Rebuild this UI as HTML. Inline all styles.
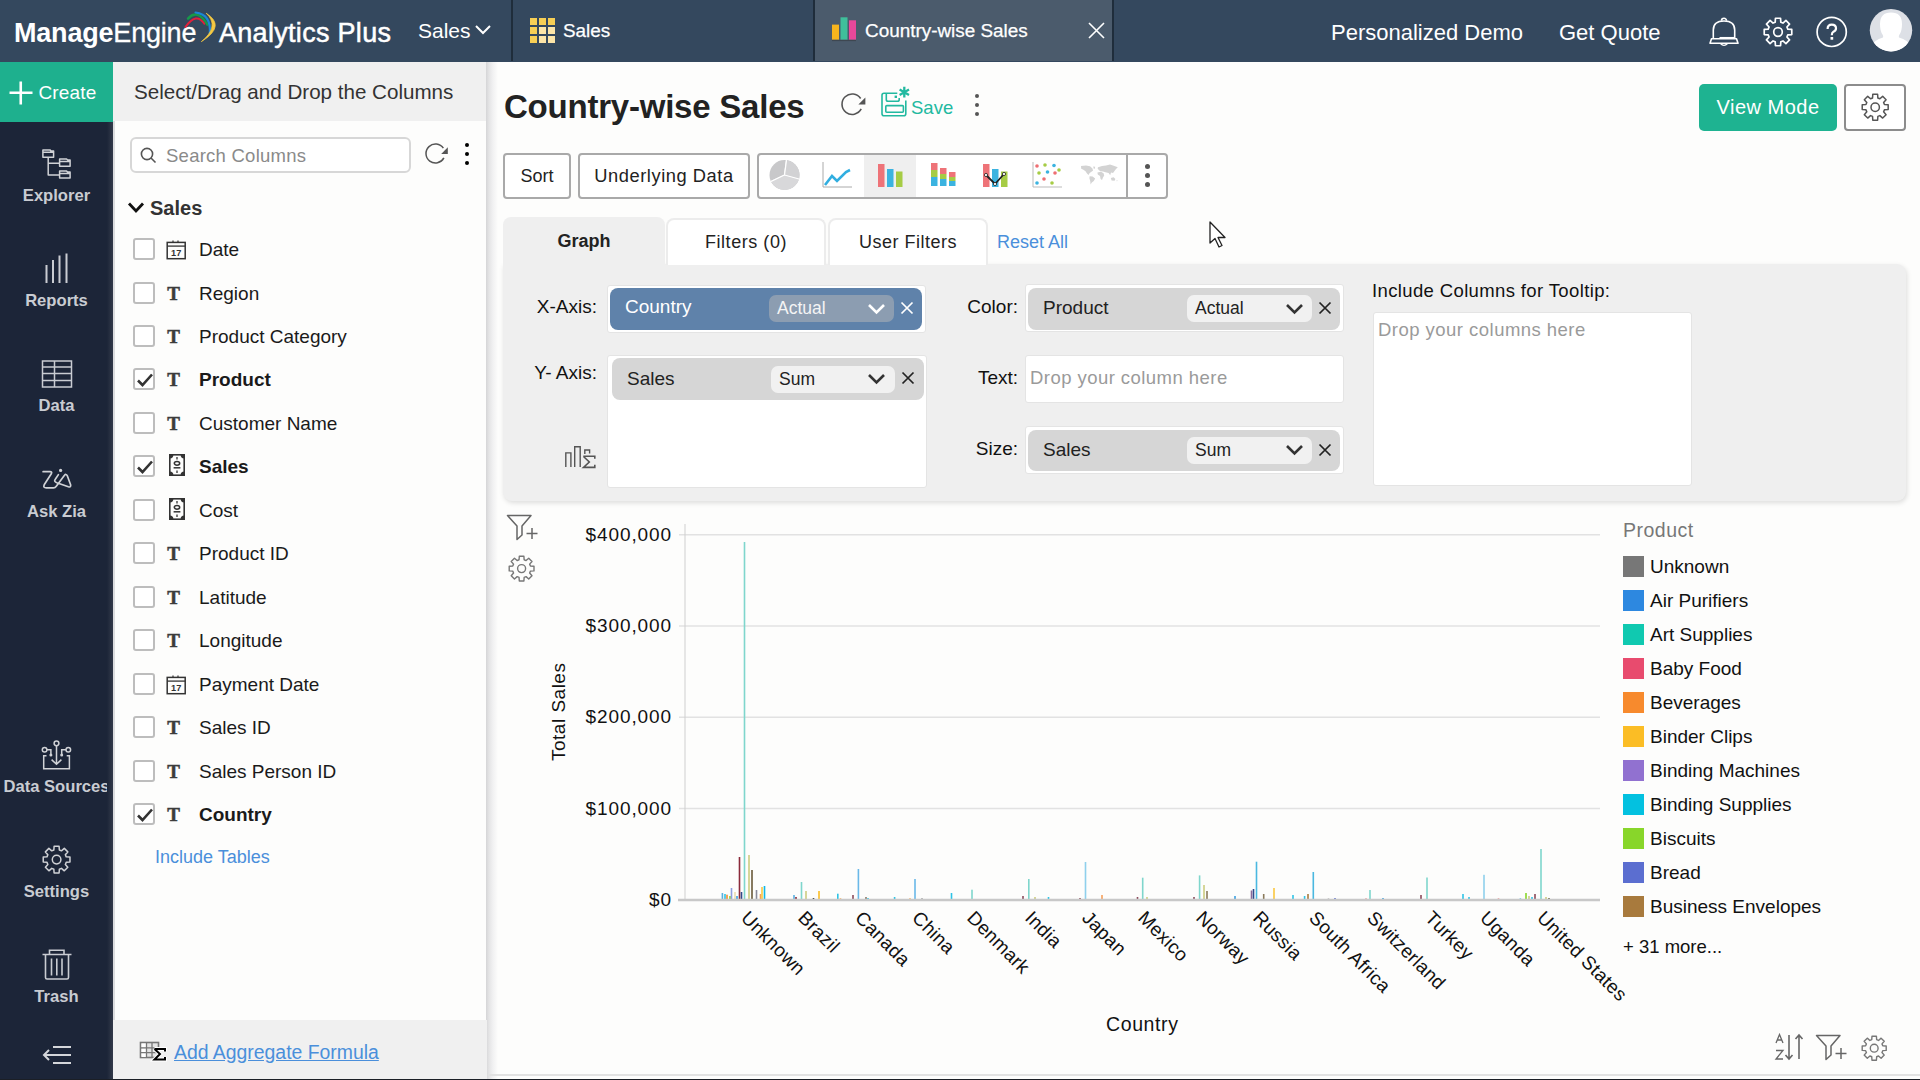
<!DOCTYPE html>
<html><head><meta charset="utf-8">
<style>
*{box-sizing:border-box;margin:0;padding:0}
html,body{width:1920px;height:1080px;overflow:hidden;background:#fdfdfc;font-family:"Liberation Sans",sans-serif;color:#111}
.a{position:absolute}
#top{left:0;top:0;width:1920px;height:62px;background:#34485e}
#side{left:0;top:62px;width:113px;height:1018px;background:#1c2538}
#create{left:0;top:62px;width:113px;height:60px;background:#1eb08e;color:#fff;font-size:19px}
.nav{left:0;width:113px;text-align:center;color:#c9ccd2;font-size:16.6px;font-weight:bold}
#cols{left:113px;top:62px;width:373px;height:1017px;background:#fdfdfc}
#colhead{left:113px;top:62px;width:373px;height:59px;background:#f0f0f0;color:#333;font-size:20px}
.ci{left:133px;height:22px;width:330px}
.cb{position:absolute;left:-0.5px;top:0;width:22px;height:22px;border:2px solid #bdbdbd;border-radius:3px;background:#fff}
.ti{position:absolute;left:29.5px;top:1px;width:22px;height:22px;font-family:"Liberation Serif",serif;font-weight:bold;font-size:19px;color:#3c3c3c;-webkit-text-stroke:0.5px #3c3c3c;text-align:center;line-height:22px}
.cl{position:absolute;left:66px;top:1px;font-size:19px;line-height:22px;color:#1a1a1a;white-space:nowrap}
.btn{border:2px solid #a9a9a9;border-radius:4px;background:#fff;font-size:19px;color:#222;text-align:center}
.lbl{font-size:19px;color:#111;text-align:right;white-space:nowrap}
.dz{background:#fff;border:1px solid #e4e4e4;border-radius:3px}
.pill{background:#d6d6d6;border-radius:8px}
.sub{background:#f1f1f1;border-radius:7px}
.ylab{font-size:19px;letter-spacing:0.9px;color:#111;text-align:right;width:120px;white-space:nowrap}
.xl{font-size:19px;letter-spacing:0.3px;color:#111;white-space:nowrap;transform-origin:0 0;transform:rotate(45deg)}
.lg{left:1623px;height:21px;width:290px}
.sw{position:absolute;left:0;top:0;width:21px;height:21px}
.lt{position:absolute;left:27px;top:-1px;font-size:19px;line-height:23px;color:#111;white-space:nowrap}
</style></head><body>
<div id="top" class="a"></div>
<div class="a" style="left:14px;top:16px;font-size:27px;color:#fff;white-space:nowrap;line-height:34px;letter-spacing:-0.2px" id="logo1"><b style="font-weight:bold">Manage</b><span style="-webkit-text-stroke:0.3px #fff">Engine</span></div>
<svg class="a" style="left:175px;top:5px" width="50" height="45" viewBox="175 5 50 45" fill="none" stroke-linecap="round">
<path d="M185.5 27 Q196.2 11.8 204.4 23.6" stroke="#e0203c" stroke-width="2.1"/>
<path d="M188 18.6 Q197.4 8.2 207.4 24.6" stroke="#17984a" stroke-width="2.5"/>
<path d="M195.5 12.5 Q211.6 14.4 209.8 33.8" stroke="#1b86d6" stroke-width="2.2"/>
<path d="M206.5 13.4 Q226.5 26 201.3 41.7 Q220 26.5 206.5 13.4 Z" fill="#f4c842" stroke="#f4c842" stroke-width="0.7"/>
</svg>
<div class="a" style="left:219px;top:16px;font-size:27px;color:#fff;white-space:nowrap;line-height:34px;letter-spacing:0.3px;-webkit-text-stroke:0.5px #fff" id="logo2">Analytics Plus</div>
<div class="a" style="left:418px;top:17px;font-size:21px;color:#fff;line-height:28px" id="salesdd">Sales</div>
<svg class="a" style="left:474px;top:24px" width="18" height="12" viewBox="0 0 18 12"><path d="M2 2 L9 9 L16 2" stroke="#fff" stroke-width="2" fill="none"/></svg>
<div class="a" style="left:511px;top:0;width:2px;height:61px;background:#1f2d3b"></div>
<svg class="a" style="left:530px;top:18px" width="25" height="25" viewBox="0 0 25 25">
<rect x="0" y="0" width="7" height="7" fill="#f7cf55"/><rect x="9" y="0" width="7" height="7" fill="#f7cf55"/><rect x="18" y="0" width="7" height="7" fill="#f7cf55"/>
<rect x="0" y="9" width="7" height="7" fill="#f7cf55"/><rect x="9" y="9" width="7" height="7" fill="#fce5a8"/><rect x="18" y="9" width="7" height="7" fill="#fce5a8"/>
<rect x="0" y="18" width="7" height="7" fill="#f7cf55"/><rect x="9" y="18" width="7" height="7" fill="#fce5a8"/><rect x="18" y="18" width="7" height="7" fill="#fce5a8"/>
</svg>
<div class="a" style="left:563px;top:17px;font-size:18.9px;color:#fff;line-height:28px;-webkit-text-stroke:0.25px #fff" id="tab1">Sales</div>
<div class="a" style="left:813px;top:0;width:301px;height:61px;background:#4b5b6c;border-left:2px solid #1f2d3b;border-right:2px solid #1f2d3b"></div>
<svg class="a" style="left:831px;top:16px" width="27" height="27" viewBox="831 16 27 27"><rect x="832" y="24.6" width="7" height="15" fill="#f7b51e"/><rect x="840.5" y="17.3" width="7" height="22.3" fill="#3fbf9b"/><rect x="849" y="20.3" width="7" height="19.3" fill="#e8489a"/><path d="M832 40.6 H856" stroke="#3a4048" stroke-width="0.8"/></svg>
<div class="a" style="left:865px;top:17px;font-size:18.9px;color:#fff;line-height:28px;white-space:nowrap;-webkit-text-stroke:0.25px #fff" id="tab2">Country-wise Sales</div>
<svg class="a" style="left:1088px;top:22px" width="17" height="17" viewBox="0 0 17 17"><path d="M1 1 L16 16 M16 1 L1 16" stroke="#fff" stroke-width="1.6"/></svg>
<div class="a" style="left:1331px;top:18.5px;font-size:22px;color:#fff;line-height:28px;white-space:nowrap" id="pdemo">Personalized Demo</div>
<div class="a" style="left:1559px;top:18.5px;font-size:22px;color:#fff;line-height:28px;white-space:nowrap" id="gq">Get Quote</div>
<svg class="a" style="left:1704px;top:14px" width="40" height="36" viewBox="1704 14 40 36" fill="none" stroke="#fff" stroke-width="1.6" stroke-linejoin="round">
<path d="M1713.3 38.8 V30 Q1713.3 21 1724 21 Q1734.7 21 1734.7 30 V38.8"/>
<path d="M1710 43.2 L1711.5 38.8 H1736.5 L1738 43.2 Z"/>
<path d="M1719.5 37.6 H1734.5" stroke-width="1.3"/>
<path d="M1721.5 20.8 A2.5 2.5 0 0 1 1726.5 20.8"/>
<path d="M1720.5 43.6 Q1724 47.2 1727.5 43.6" stroke-width="1.4"/>
</svg>
<svg class="a" style="left:1761.00px;top:14.80px" width="34" height="34" viewBox="1761.00 14.80 34 34" fill="none" stroke="#fff" stroke-width="1.7" stroke-linejoin="round"><path d="M1775.19 22.00 L1775.45 18.03 L1780.55 18.03 L1780.81 22.00 L1782.95 22.88 L1785.93 20.26 L1789.54 23.87 L1786.92 26.85 L1787.80 28.99 L1791.77 29.25 L1791.77 34.35 L1787.80 34.61 L1786.92 36.75 L1789.54 39.73 L1785.93 43.34 L1782.95 40.72 L1780.81 41.60 L1780.55 45.57 L1775.45 45.57 L1775.19 41.60 L1773.05 40.72 L1770.07 43.34 L1766.46 39.73 L1769.08 36.75 L1768.20 34.61 L1764.23 34.35 L1764.23 29.25 L1768.20 28.99 L1769.08 26.85 L1766.46 23.87 L1770.07 20.26 L1773.05 22.88 Z"/><circle cx="1778.00" cy="31.80" r="4.30"/></svg>
<svg class="a" style="left:1814px;top:14px" width="36" height="36" viewBox="1814 14 36 36" fill="none" stroke="#fff">
<circle cx="1831.7" cy="31.9" r="14.6" stroke-width="1.7"/>
<path d="M1827.6 29 Q1827.6 24.6 1831.8 24.6 Q1836 24.6 1836 28.2 Q1836 30.6 1833.4 31.8 Q1831.8 32.6 1831.8 35.2" stroke-width="2.2"/>
<rect x="1830.5" y="37" width="2.7" height="2.7" fill="#fff" stroke="none"/>
</svg>
<svg class="a" style="left:1869px;top:8px" width="45" height="45" viewBox="1869 8 45 45">
<defs><clipPath id="avc"><circle cx="1891" cy="30.2" r="21.2"/></clipPath></defs>
<circle cx="1891" cy="30.2" r="21.2" fill="#dde0e6"/>
<g clip-path="url(#avc)" fill="#fff">
<path d="M1880 24 Q1880 12.5 1891 12.5 Q1902 12.5 1902 24 Q1902 31 1899.5 34.5 Q1898.5 36 1899 37.5 Q1908 40 1911 46 L1911 56 H1871 V46 Q1874 40 1883 37.5 Q1883.5 36 1882.5 34.5 Q1880 31 1880 24 Z"/>
</g></svg>

<div id="side" class="a"></div>
<div id="create" class="a"></div>
<svg class="a" style="left:8.5px;top:80.5px" width="24" height="24" viewBox="0 0 24 24"><path d="M11.75 0.5 V23.5 M0.5 11.75 H23.5" stroke="#fff" stroke-width="2.6"/></svg>
<div class="a" style="left:38.5px;top:81px;font-size:19px;color:#fff;line-height:24px;letter-spacing:0.15px" id="createtxt">Create</div>
<svg class="a" style="left:38px;top:145px" width="36" height="36" viewBox="38 145 36 36" fill="none" stroke="#d0d2d6" stroke-width="1.5" stroke-linejoin="round"><path d="M42.9 157.3 V149.9 H49.9 L50.9 150.9 H53.6 V157.3 Z M42.9 152.3 H53.6 M59.6 166.2 V159.0 H66.6 L67.6 160.0 H70.1 V166.2 Z M59.6 161.4 H70.1 M59.6 178.1 V171.1 H66.6 L67.6 172.1 H70.1 V178.1 Z M59.6 173.5 H70.1 M48.2 157.5 V175 H59.5 M48.2 163.2 H59.5"/></svg>
<div class="a nav" style="top:185px;line-height:22px" id="nav1">Explorer</div>
<svg class="a" style="left:44px;top:252px" width="26" height="34" viewBox="0 0 26 34" fill="none" stroke="#c9ccd2" stroke-width="2">
<path d="M2.5 13 V31 M9 8 V31 M15.5 3.5 V31 M22.5 1.5 V31"/>
</svg>
<div class="a nav" style="top:290px;line-height:22px" id="nav2">Reports</div>
<svg class="a" style="left:41px;top:359px" width="32" height="30" viewBox="0 0 32 30" fill="none" stroke="#c9ccd2" stroke-width="1.5">
<rect x="1.5" y="2" width="29" height="26"/><path d="M13.5 2 V28 M1.5 8 H30.5 M1.5 14.5 H30.5 M1.5 21.5 H30.5"/>
</svg>
<div class="a nav" style="top:395px;line-height:22px" id="nav3">Data</div>
<svg class="a" style="left:38px;top:465px" width="36" height="28" viewBox="38 465 36 28" fill="none" stroke="#d0d2d6" stroke-width="1.7" stroke-linejoin="round" stroke-linecap="round">
<path d="M43.1 471.7 H50 Q52.5 471.7 51.3 473.8 L44.2 484.8 Q42.8 487.9 46.3 487.9 H53.5 Q55.2 487.9 56.3 486.3 L64.3 475.5 Q66.1 473.3 67.3 475.8 L70.6 484.8 Q71.2 487.6 68.4 486.8 L56.8 482.8 Q53.5 481.5 55.3 479.3 L58.4 474.6"/>
<circle cx="60.6" cy="470.4" r="1.6" fill="#d0d2d6" stroke="none"/>
</svg>
<div class="a nav" style="top:501px;line-height:22px" id="nav4">Ask Zia</div>
<svg class="a" style="left:38px;top:738px" width="36" height="34" viewBox="38 738 36 34" fill="none" stroke="#d0d2d6" stroke-width="1.5">
<path d="M46.5 755.7 H43.7 V768.7 H69.4 V755.7 H66.7"/>
<path d="M56.5 745.8 V764 M51.6 759.6 L56.5 764.3 L61.4 759.6"/>
<circle cx="56.5" cy="743.3" r="2.4"/><circle cx="44.6" cy="749.8" r="2.3"/><circle cx="68.3" cy="749.8" r="2.3"/>
<path d="M46.9 749.8 H50.9 V754 M66 749.8 H61.7 V754"/>
<circle cx="50.9" cy="755" r="1.5" fill="#d0d2d6" stroke="none"/><circle cx="61.7" cy="755" r="1.5" fill="#d0d2d6" stroke="none"/>
</svg>
<div class="a nav" style="top:776px;line-height:22px;font-size:16.6px" id="nav5">Data Sources</div>
<svg class="a" style="left:40.00px;top:843.40px" width="33" height="33" viewBox="40.00 843.40 33 33" fill="none" stroke="#d0d2d6" stroke-width="1.5" stroke-linejoin="round"><path d="M53.84 850.39 L54.12 846.63 L59.08 846.63 L59.36 850.39 L61.45 851.25 L64.30 848.79 L67.81 852.30 L65.35 855.15 L66.21 857.24 L69.97 857.52 L69.97 862.48 L66.21 862.76 L65.35 864.85 L67.81 867.70 L64.30 871.21 L61.45 868.75 L59.36 869.61 L59.08 873.37 L54.12 873.37 L53.84 869.61 L51.75 868.75 L48.90 871.21 L45.39 867.70 L47.85 864.85 L46.99 862.76 L43.23 862.48 L43.23 857.52 L46.99 857.24 L47.85 855.15 L45.39 852.30 L48.90 848.79 L51.75 851.25 Z"/><circle cx="56.60" cy="860.00" r="4.30"/></svg>
<div class="a nav" style="top:881px;line-height:22px" id="nav6">Settings</div>
<svg class="a" style="left:41px;top:948px" width="32" height="33" viewBox="0 0 32 33" fill="none" stroke="#c9ccd2" stroke-width="1.6">
<path d="M1.5 6.5 H30.5 M8.5 6 V2.2 H23 V6 M4.5 7 V29.5 Q4.5 31 6 31 H26 Q27.5 31 27.5 29.5 V7 M10.5 10.5 V27.5 M15.8 10.5 V27.5 M21 10.5 V27.5"/>
</svg>
<div class="a nav" style="top:986px;line-height:22px" id="nav7">Trash</div>
<svg class="a" style="left:40px;top:1043px" width="34" height="24" viewBox="0 0 34 24" fill="none" stroke="#d4d6da" stroke-width="2"><path d="M13 4 H31 M13 20 H31 M4 12 H31 M9 7 L4 12 L9 17"/></svg>


<div id="cols" class="a"></div>
<div class="a" style="left:486px;top:62px;width:12px;height:1017px;background:linear-gradient(to right,#d5d5d7,#e4e4e5 25%,#f0f0f1 55%,#fdfdfc)"></div>
<div class="a" style="left:113px;top:62px;width:2px;height:1017px;background:#dcdddf"></div>
<div class="a" style="left:107px;top:122px;width:6px;height:957px;background:linear-gradient(to right,#1c2538,#333a4a)"></div>
<div id="colhead" class="a"></div>
<div class="a" style="left:134px;top:80px;font-size:20.6px;color:#333;line-height:24px;white-space:nowrap" id="colhdtxt">Select/Drag and Drop the Columns</div>
<div class="a" style="left:130px;top:137px;width:281px;height:36px;border:2px solid #d7d7d7;border-radius:6px;background:#fff"></div>
<svg class="a" style="left:140px;top:147px" width="17" height="17" viewBox="0 0 17 17" fill="none" stroke="#555" stroke-width="1.6"><circle cx="7" cy="7" r="5.6"/><path d="M11 11 L15.5 15.5"/></svg>
<div class="a" style="left:166px;top:145px;font-size:18.5px;letter-spacing:0.25px;color:#8a8a8a;line-height:22px;white-space:nowrap" id="searchph">Search Columns</div>
<svg class="a" style="left:420.9px;top:139.0px" width="29" height="29" viewBox="420.9 139.0 29 29"><path d="M443.79 157.96 A9.50 9.50 0 1 1 443.28 148.19" fill="none" stroke="#555" stroke-width="1.5"/><path d="M447.72 147.28 V153.88 H441.12 Z" fill="#555"/></svg>
<div class="a" style="left:464.9px;top:142.9px;width:4.2px;height:4.2px;border-radius:50%;background:#000"></div>
<div class="a" style="left:464.9px;top:151.9px;width:4.2px;height:4.2px;border-radius:50%;background:#000"></div>
<div class="a" style="left:464.9px;top:160.9px;width:4.2px;height:4.2px;border-radius:50%;background:#000"></div>
<svg class="a" style="left:127px;top:201px" width="18" height="13" viewBox="0 0 18 13"><path d="M2 2.5 L9 10 L16 2.5" stroke="#111" stroke-width="2.8" fill="none"/></svg>
<div class="a" style="left:150px;top:196px;font-size:20px;font-weight:bold;color:#333;line-height:24px" id="salestree">Sales</div>
<div class="a ci" style="top:238.0px"><div class="cb"></div><svg style="position:absolute;left:33px;top:2px" width="21" height="20" viewBox="0 0 21 20" fill="none" stroke="#333" stroke-width="1.5"><rect x="1.2" y="2.4" width="18" height="16.3"/><path d="M1.2 6.1 H19.2" stroke-width="1.3"/><path d="M7 0.6 V2.6 M12 0.6 V2.6" stroke-width="1.2"/><text x="10.2" y="16.2" font-size="9.2" font-family="Liberation Sans" font-weight="bold" fill="#333" stroke="none" text-anchor="middle">17</text></svg><div class="cl" style="">Date</div></div>
<div class="a ci" style="top:281.5px"><div class="cb"></div><div class="ti">T</div><div class="cl" style="">Region</div></div>
<div class="a ci" style="top:325.0px"><div class="cb"></div><div class="ti">T</div><div class="cl" style="">Product Category</div></div>
<div class="a ci" style="top:368.4px"><div class="cb"><svg style="position:absolute;left:1px;top:2px" width="18" height="16" viewBox="0 0 18 16"><path d="M2 8.5 L6.5 13 L16 2.5" stroke="#333" stroke-width="2.6" fill="none"/></svg></div><div class="ti">T</div><div class="cl" style="font-weight:bold">Product</div></div>
<div class="a ci" style="top:411.9px"><div class="cb"></div><div class="ti">T</div><div class="cl" style="">Customer Name</div></div>
<div class="a ci" style="top:455.4px"><div class="cb"><svg style="position:absolute;left:1px;top:2px" width="18" height="16" viewBox="0 0 18 16"><path d="M2 8.5 L6.5 13 L16 2.5" stroke="#333" stroke-width="2.6" fill="none"/></svg></div><svg style="position:absolute;left:36px;top:-1px" width="16" height="22" viewBox="0 0 16 22" fill="none" stroke="#333"><rect x="0.8" y="0.8" width="14.4" height="20.4" stroke-width="1.6"/><path d="M0.8 0.8 h3.6 a3.6 3.6 0 0 1 -3.6 3.6 z M15.2 0.8 h-3.6 a3.6 3.6 0 0 0 3.6 3.6 z M0.8 21.2 h3.6 a3.6 3.6 0 0 0 -3.6 -3.6 z M15.2 21.2 h-3.6 a3.6 3.6 0 0 1 3.6 -3.6 z" fill="#333" stroke="none"/><path d="M8 3 V5.5 M8 16.5 V19" stroke-width="1.3"/><ellipse cx="8" cy="9.3" rx="2.7" ry="1.9" stroke-width="1.5"/><path d="M4.6 13.8 H11.4" stroke-width="1.5"/></svg><div class="cl" style="font-weight:bold">Sales</div></div>
<div class="a ci" style="top:498.9px"><div class="cb"></div><svg style="position:absolute;left:36px;top:-1px" width="16" height="22" viewBox="0 0 16 22" fill="none" stroke="#333"><rect x="0.8" y="0.8" width="14.4" height="20.4" stroke-width="1.6"/><path d="M0.8 0.8 h3.6 a3.6 3.6 0 0 1 -3.6 3.6 z M15.2 0.8 h-3.6 a3.6 3.6 0 0 0 3.6 3.6 z M0.8 21.2 h3.6 a3.6 3.6 0 0 0 -3.6 -3.6 z M15.2 21.2 h-3.6 a3.6 3.6 0 0 1 3.6 -3.6 z" fill="#333" stroke="none"/><path d="M8 3 V5.5 M8 16.5 V19" stroke-width="1.3"/><ellipse cx="8" cy="9.3" rx="2.7" ry="1.9" stroke-width="1.5"/><path d="M4.6 13.8 H11.4" stroke-width="1.5"/></svg><div class="cl" style="">Cost</div></div>
<div class="a ci" style="top:542.4px"><div class="cb"></div><div class="ti">T</div><div class="cl" style="">Product ID</div></div>
<div class="a ci" style="top:585.8px"><div class="cb"></div><div class="ti">T</div><div class="cl" style="">Latitude</div></div>
<div class="a ci" style="top:629.3px"><div class="cb"></div><div class="ti">T</div><div class="cl" style="">Longitude</div></div>
<div class="a ci" style="top:672.8px"><div class="cb"></div><svg style="position:absolute;left:33px;top:2px" width="21" height="20" viewBox="0 0 21 20" fill="none" stroke="#333" stroke-width="1.5"><rect x="1.2" y="2.4" width="18" height="16.3"/><path d="M1.2 6.1 H19.2" stroke-width="1.3"/><path d="M7 0.6 V2.6 M12 0.6 V2.6" stroke-width="1.2"/><text x="10.2" y="16.2" font-size="9.2" font-family="Liberation Sans" font-weight="bold" fill="#333" stroke="none" text-anchor="middle">17</text></svg><div class="cl" style="">Payment Date</div></div>
<div class="a ci" style="top:716.3px"><div class="cb"></div><div class="ti">T</div><div class="cl" style="">Sales ID</div></div>
<div class="a ci" style="top:759.8px"><div class="cb"></div><div class="ti">T</div><div class="cl" style="">Sales Person ID</div></div>
<div class="a ci" style="top:803.2px"><div class="cb"><svg style="position:absolute;left:1px;top:2px" width="18" height="16" viewBox="0 0 18 16"><path d="M2 8.5 L6.5 13 L16 2.5" stroke="#333" stroke-width="2.6" fill="none"/></svg></div><div class="ti">T</div><div class="cl" style="font-weight:bold">Country</div></div>
<div class="a" style="left:155px;top:846px;font-size:18px;color:#4a8fdb;line-height:22px;white-space:nowrap" id="incl">Include Tables</div>
<div class="a" style="left:113px;top:1020px;width:374px;height:59px;background:#f0f0f0"></div>
<svg class="a" style="left:139px;top:1041px" width="30" height="22" viewBox="0 0 30 22">
<rect x="1.5" y="1.5" width="18" height="15" fill="#e4e4e4" stroke="#777" stroke-width="1.6"/>
<rect x="2.5" y="2.5" width="5" height="4" fill="#fff"/><rect x="2.5" y="7.5" width="5" height="4" fill="#fff"/><rect x="2.5" y="12" width="5" height="4" fill="#fff"/>
<path d="M7.5 1.5 V16.5 M13 1.5 V16.5 M1.5 6.8 H19.5 M1.5 11.6 H19.5" stroke="#777" stroke-width="1.3"/>
<path d="M15.5 8 H26 V10.5 M15.5 8 L21 13 L15.5 18.5 H26 V16" stroke="#fff" stroke-width="4" fill="none"/>
<path d="M15.5 8 H26 V10.5 M15.5 8 L21 13 L15.5 18.5 H26 V16" stroke="#000" stroke-width="2" fill="none"/>
</svg>
<div class="a" style="left:174px;top:1039.5px;font-size:19.4px;color:#4a8fdb;line-height:24px;white-space:nowrap;text-decoration:underline" id="addagg">Add Aggregate Formula</div>


<div class="a" style="left:504px;top:88px;font-size:33px;letter-spacing:-0.22px;font-weight:bold;color:#222;line-height:38px;white-space:nowrap" id="title">Country-wise Sales</div>
<svg class="a" style="left:837.4px;top:88.8px" width="30" height="30" viewBox="837.4 88.8 30 30"><path d="M861.61 108.79 A10.20 10.20 0 1 1 861.06 98.30" fill="none" stroke="#555" stroke-width="1.6"/><path d="M865.79 97.41 V104.41 H858.79 Z" fill="#555"/></svg>
<svg class="a" style="left:878px;top:84px" width="36" height="36" viewBox="878 84 36 36" fill="none" stroke="#22b9a0" stroke-width="1.6">
<path d="M897.3 93.2 H884 Q882 93.2 882 95.2 V113.8 Q882 115.8 884 115.8 H903.8 Q905.8 115.8 905.8 113.8 V100.5"/>
<path d="M886.3 93.4 V99.4 Q886.3 101.2 888 101.2 H897.5 Q899.2 101.2 899.2 99.4 V98"/>
<rect x="885.8" y="105.6" width="17.6" height="6.6" rx="1"/>
<rect x="894.6" y="95.6" width="2.4" height="2.4" fill="#22b9a0" stroke="none"/>
<path d="M904.3 86.8 V97.6 M899.6 89.5 L909 94.9 M909 89.5 L899.6 94.9" stroke-width="2.3"/>
</svg>
<div class="a" style="left:911px;top:97px;font-size:18.5px;color:#22b9a0;line-height:22px" id="save">Save</div>
<div class="a" style="left:974.8px;top:93.8px;width:4.4px;height:4.4px;border-radius:50%;background:#555"></div>
<div class="a" style="left:974.8px;top:102.8px;width:4.4px;height:4.4px;border-radius:50%;background:#555"></div>
<div class="a" style="left:974.8px;top:111.8px;width:4.4px;height:4.4px;border-radius:50%;background:#555"></div>
<div class="a" style="left:1699px;top:84px;width:138px;height:47px;background:#1eb391;border-radius:5px"></div>
<div class="a" style="left:1699px;top:84px;width:138px;height:47px;font-size:20px;letter-spacing:0.5px;color:#fff;line-height:47px;text-align:center" id="viewmode">View Mode</div>
<div class="a btn" style="left:1844px;top:84px;width:62px;height:47px;border-color:#8c8c8c"></div>
<svg class="a" style="left:1858.80px;top:91.10px" width="32" height="32" viewBox="1858.80 91.10 32 32" fill="none" stroke="#555" stroke-width="1.5" stroke-linejoin="round"><path d="M1872.35 98.07 L1872.59 94.32 L1877.41 94.32 L1877.65 98.07 L1879.65 98.90 L1882.48 96.42 L1885.88 99.82 L1883.40 102.65 L1884.23 104.65 L1887.98 104.89 L1887.98 109.71 L1884.23 109.95 L1883.40 111.95 L1885.88 114.78 L1882.48 118.18 L1879.65 115.70 L1877.65 116.53 L1877.41 120.28 L1872.59 120.28 L1872.35 116.53 L1870.35 115.70 L1867.52 118.18 L1864.12 114.78 L1866.60 111.95 L1865.77 109.95 L1862.02 109.71 L1862.02 104.89 L1865.77 104.65 L1866.60 102.65 L1864.12 99.82 L1867.52 96.42 L1870.35 98.90 Z"/><circle cx="1875.00" cy="107.30" r="4.20"/></svg>

<div class="a btn" style="left:503px;top:153px;width:68px;height:46px"></div>
<div class="a" style="left:503px;top:153px;width:68px;height:46px;font-size:18px;line-height:46px;text-align:center;color:#222" id="sort">Sort</div>
<div class="a btn" style="left:578px;top:153px;width:172px;height:46px"></div>
<div class="a" style="left:578px;top:153px;width:172px;height:46px;font-size:18.3px;letter-spacing:0.55px;line-height:46px;text-align:center;color:#222" id="ud">Underlying Data</div>
<div class="a btn" style="left:757px;top:153px;width:411px;height:46px"></div>
<div class="a" style="left:864px;top:155px;width:52px;height:42px;background:#efefef"></div>
<div class="a" style="left:1126px;top:154px;width:2px;height:44px;background:#a9a9a9"></div>
<svg class="a" style="left:768px;top:159px" width="34" height="32" viewBox="0 0 34 32">
<circle cx="16.5" cy="16" r="15" fill="#c8c8ca"/>
<path d="M16.5 16 L18.5 1.2 M16.5 16 L31 20 M16.5 16 L3 22.5" stroke="#fff" stroke-width="1.2"/>
<path d="M16.5 16 L18.5 1.2 A15 15 0 0 1 31 20 Z" fill="#d2d2d4"/>
<path d="M16.5 16 L31 20 A15 15 0 0 1 3 22.5 Z" fill="#d8d8da"/>
<path d="M16.5 16 L18.5 1.2 M16.5 16 L31 20 M16.5 16 L3 22.5" stroke="#fff" stroke-width="1.2"/>
</svg>
<svg class="a" style="left:822px;top:161px" width="32" height="28" viewBox="0 0 32 28">
<path d="M1 1 V26 H30" stroke="#aaa" stroke-width="1" fill="none"/>
<path d="M3 24 L10 15 L15 20 L24 11 L28 9" stroke="#31aee0" stroke-width="2.6" fill="none"/>
</svg>
<svg class="a" style="left:876px;top:163px" width="30" height="25" viewBox="0 0 30 25">
<rect x="2" y="1" width="6.5" height="23" fill="#ee7378"/><rect x="11" y="6" width="6.5" height="18" fill="#3bb3e0"/><rect x="20" y="8.5" width="6.5" height="15.5" fill="#a6cc45"/>
</svg>
<svg class="a" style="left:930px;top:162px" width="28" height="25" viewBox="0 0 28 25">
<rect x="1" y="1" width="6.5" height="7" fill="#ee7378"/><rect x="1" y="8" width="6.5" height="7" fill="#a6cc45"/><rect x="1" y="15" width="6.5" height="9" fill="#3bb3e0"/>
<rect x="10" y="6" width="6.5" height="6" fill="#ee7378"/><rect x="10" y="12" width="6.5" height="5" fill="#a6cc45"/><rect x="10" y="17" width="6.5" height="7" fill="#3bb3e0"/>
<rect x="19" y="10" width="6.5" height="5" fill="#ee7378"/><rect x="19" y="15" width="6.5" height="4" fill="#a6cc45"/><rect x="19" y="19" width="6.5" height="5" fill="#3bb3e0"/>
</svg>
<svg class="a" style="left:982px;top:163px" width="28" height="25" viewBox="0 0 28 25">
<rect x="1" y="1" width="6.5" height="23" fill="#ee7378"/><rect x="10" y="6" width="6.5" height="18" fill="#3bb3e0"/><rect x="19" y="8.5" width="6.5" height="15.5" fill="#a6cc45"/>
<path d="M4 12 L13 21 L22 11" stroke="#222" stroke-width="1.8" fill="none"/>
<circle cx="4" cy="12" r="1.6" fill="#fff" stroke="#222" stroke-width="0.8"/><circle cx="13" cy="21" r="1.6" fill="#fff" stroke="#222" stroke-width="0.8"/><circle cx="22" cy="11" r="1.6" fill="#fff" stroke="#222" stroke-width="0.8"/>
</svg>
<svg class="a" style="left:1032px;top:161px" width="32" height="28" viewBox="0 0 32 28">
<path d="M1 1 V26 H30" stroke="#bbb" stroke-width="1" fill="none"/>
<circle cx="5" cy="5" r="1.8" fill="#ee6f73"/><circle cx="13" cy="4" r="1.8" fill="#a6cc45"/><circle cx="22" cy="4.5" r="1.8" fill="#3bb3e0"/><circle cx="27" cy="9" r="1.8" fill="#a6cc45"/>
<circle cx="7" cy="12" r="1.8" fill="#a6cc45"/><circle cx="15.5" cy="11" r="1.8" fill="#3bb3e0"/><circle cx="23" cy="12" r="1.8" fill="#ee6f73"/>
<circle cx="12" cy="18" r="1.8" fill="#ee6f73"/><circle cx="5" cy="22" r="1.8" fill="#3bb3e0"/><circle cx="20" cy="22" r="1.8" fill="#a6cc45"/>
</svg>
<svg class="a" style="left:1078px;top:162px" width="44" height="26" viewBox="1078 162 44 26" fill="#d3d3d3">
<path d="M1081 166 L1086 165.6 L1090 166.2 L1092.5 168.5 L1093 170.8 L1091 172 L1089.5 173.2 L1088.5 175 L1087 173.5 L1085.5 171.2 L1083 169.5 L1081.2 168.8 Z"/>
<path d="M1093.2 166.4 L1095.2 166.8 L1094.6 169 L1093.6 168.6 Z"/>
<path d="M1089.6 176.2 L1092.6 176.4 L1095.2 178.4 L1093.8 181 L1091.8 182.6 L1090.6 184.6 L1090.2 181 L1089.4 178.2 Z"/>
<path d="M1098 167.2 L1102 166 L1106 165.6 L1110 164.6 L1113 165.4 L1117.8 167.2 L1116 169 L1114.5 171 L1113 173 L1111 172.4 L1110.2 175.2 L1108.6 173 L1105.5 172.2 L1103 171.5 L1100.5 171.2 L1099 170.2 L1097.6 168.6 Z"/>
<path d="M1097.4 172.6 L1101 171.8 L1103.6 173.2 L1104.2 175.4 L1103 177.4 L1102 180 L1100.6 179 L1100 176 L1097.8 174.6 Z"/>
<path d="M1110.8 178 L1113.6 177.2 L1115.4 179 L1114.6 180.8 L1111.6 180.6 Z"/>
<path d="M1116.4 180.6 L1117.6 180.2 L1117 181.6 Z"/>
</svg>
<div class="a" style="left:1145px;top:164px;width:5px;height:5px;border-radius:50%;background:#555"></div>
<div class="a" style="left:1145px;top:173px;width:5px;height:5px;border-radius:50%;background:#555"></div>
<div class="a" style="left:1145px;top:182px;width:5px;height:5px;border-radius:50%;background:#555"></div>

<div class="a" style="left:503px;top:264px;width:1403px;height:237px;background:#efefef;border-radius:0 9px 9px 9px;box-shadow:1px 2px 5px rgba(0,0,0,.13)"></div>
<div class="a" style="left:503px;top:217px;width:162px;height:48px;background:#efefef;border-radius:8px 8px 0 0"></div>
<div class="a" style="left:666px;top:218px;width:160px;height:47px;background:#fff;border:2px solid #ececec;border-bottom:none;border-radius:8px 8px 0 0"></div>
<div class="a" style="left:828px;top:218px;width:160px;height:47px;background:#fff;border:2px solid #ececec;border-bottom:none;border-radius:8px 8px 0 0"></div>
<div class="a" style="left:503px;top:217px;width:162px;height:48px;font-size:18px;font-weight:bold;line-height:48px;text-align:center;color:#222" id="tgraph">Graph</div>
<div class="a" style="left:666px;top:218px;width:160px;height:47px;font-size:18px;letter-spacing:0.55px;line-height:49px;text-align:center;color:#222" id="tfilt">Filters (0)</div>
<div class="a" style="left:828px;top:218px;width:160px;height:47px;font-size:18px;letter-spacing:0.5px;line-height:49px;text-align:center;color:#222" id="tuser">User Filters</div>
<div class="a" style="left:997px;top:230px;font-size:18px;line-height:24px;color:#4a8fdb" id="reset">Reset All</div>
<svg class="a" style="left:1208px;top:220px" width="22" height="30" viewBox="0 0 22 30"><path d="M2 2 L2 23 L7 18.5 L11 27 L14 25.5 L10 17.5 L17 17.5 Z" fill="#fff" stroke="#222" stroke-width="1.3" stroke-linejoin="round"/></svg>

<div class="a lbl" style="left:497px;top:295px;width:100px;line-height:24px" id="lx">X-Axis:</div>
<div class="a dz" style="left:607px;top:285px;width:319px;height:48px"></div>
<div class="a" style="left:610px;top:288px;width:312px;height:42px;background:#5f82aa;border-radius:8px"></div>
<div class="a" style="left:625px;top:295px;font-size:19px;color:#fff;line-height:24px" id="pcountry">Country</div>
<div class="a" style="left:769px;top:295px;width:125px;height:27px;background:#8c9db1;border-radius:7px"></div>
<div class="a" style="left:777px;top:296px;font-size:17.5px;color:#f4f4f4;line-height:24px" id="pactual1">Actual</div>
<svg class="a" style="left:867px;top:303px" width="19" height="12" viewBox="0 0 19 12"><path d="M2 2 L9.5 9.5 L17 2" stroke="#fff" stroke-width="2.6" fill="none"/></svg><svg class="a" style="left:900px;top:301px" width="14" height="14" viewBox="0 0 14 14"><path d="M1.5 1.5 L12.5 12.5 M12.5 1.5 L1.5 12.5" stroke="#fff" stroke-width="1.75"/></svg>
<div class="a lbl" style="left:497px;top:361px;width:100px;line-height:24px" id="ly">Y- Axis:</div>
<div class="a dz" style="left:607px;top:355px;width:320px;height:133px"></div>
<div class="a pill" style="left:612px;top:358px;width:312px;height:42px"></div>
<div class="a" style="left:627px;top:367px;font-size:19px;color:#222;line-height:24px" id="psales1">Sales</div>
<div class="a sub" style="left:771px;top:366px;width:124px;height:27px"></div>
<div class="a" style="left:779px;top:367px;font-size:17.5px;color:#222;line-height:24px" id="psum1">Sum</div>
<svg class="a" style="left:867px;top:373px" width="19" height="12" viewBox="0 0 19 12"><path d="M2 2 L9.5 9.5 L17 2" stroke="#333" stroke-width="2.6" fill="none"/></svg><svg class="a" style="left:901px;top:371px" width="14" height="14" viewBox="0 0 14 14"><path d="M1.5 1.5 L12.5 12.5 M12.5 1.5 L1.5 12.5" stroke="#222" stroke-width="1.75"/></svg>
<svg class="a" style="left:560px;top:442px" width="40" height="30" viewBox="560 442 40 30" fill="none" stroke="#555" stroke-width="1.4">
<path d="M565.8 467 V452.9 H570.9 V467 M574.7 467 V446.7 H580.2 V467 M584.8 454 V450 H589.6 V453.5"/>
<path d="M583.3 456.3 H594.8 V458.8 M583.5 456.5 L589.3 462 L583.5 467.4 H594.8 V464.8" stroke-width="1.6"/>
</svg>
<div class="a lbl" style="left:918px;top:295px;width:100px;line-height:24px" id="lcolor">Color:</div>
<div class="a dz" style="left:1025px;top:284px;width:319px;height:48px"></div>
<div class="a pill" style="left:1028px;top:288px;width:312px;height:42px"></div>
<div class="a" style="left:1043px;top:296px;font-size:19px;color:#222;line-height:24px" id="pproduct">Product</div>
<div class="a sub" style="left:1187px;top:295px;width:125px;height:27px"></div>
<div class="a" style="left:1195px;top:296px;font-size:17.5px;color:#222;line-height:24px" id="pactual2">Actual</div>
<svg class="a" style="left:1285px;top:303px" width="19" height="12" viewBox="0 0 19 12"><path d="M2 2 L9.5 9.5 L17 2" stroke="#333" stroke-width="2.6" fill="none"/></svg><svg class="a" style="left:1318px;top:301px" width="14" height="14" viewBox="0 0 14 14"><path d="M1.5 1.5 L12.5 12.5 M12.5 1.5 L1.5 12.5" stroke="#222" stroke-width="1.75"/></svg>
<div class="a lbl" style="left:918px;top:366px;width:100px;line-height:24px" id="ltext">Text:</div>
<div class="a dz" style="left:1025px;top:355px;width:319px;height:48px"></div>
<div class="a" style="left:1030px;top:366px;font-size:18.5px;letter-spacing:0.45px;color:#9a9a9a;line-height:24px;white-space:nowrap" id="ph1">Drop your column here</div>
<div class="a lbl" style="left:918px;top:437px;width:100px;line-height:24px" id="lsize">Size:</div>
<div class="a dz" style="left:1025px;top:426px;width:319px;height:48px"></div>
<div class="a pill" style="left:1028px;top:430px;width:312px;height:41px"></div>
<div class="a" style="left:1043px;top:438px;font-size:19px;color:#222;line-height:24px" id="psales2">Sales</div>
<div class="a sub" style="left:1187px;top:437px;width:125px;height:27px"></div>
<div class="a" style="left:1195px;top:438px;font-size:17.5px;color:#222;line-height:24px" id="psum2">Sum</div>
<svg class="a" style="left:1285px;top:444px" width="19" height="12" viewBox="0 0 19 12"><path d="M2 2 L9.5 9.5 L17 2" stroke="#333" stroke-width="2.6" fill="none"/></svg><svg class="a" style="left:1318px;top:443px" width="14" height="14" viewBox="0 0 14 14"><path d="M1.5 1.5 L12.5 12.5 M12.5 1.5 L1.5 12.5" stroke="#222" stroke-width="1.75"/></svg>
<div class="a" style="left:1372px;top:279px;font-size:18.5px;letter-spacing:0.37px;color:#111;line-height:24px;white-space:nowrap" id="ltip">Include Columns for Tooltip:</div>
<div class="a dz" style="left:1373px;top:312px;width:319px;height:174px"></div>
<div class="a" style="left:1378px;top:318px;font-size:18.5px;letter-spacing:0.47px;color:#9a9a9a;line-height:24px;white-space:nowrap" id="ph2">Drop your columns here</div>

<svg class="a" style="left:506px;top:514px" width="34" height="28" viewBox="0 0 34 28" fill="none" stroke="#666" stroke-width="1.5">
<path d="M1.5 1.5 H25 L16 12 V21 L11 25.5 V12 Z" stroke-linejoin="round"/><path d="M26 14 V25 M20.5 19.5 H31.5"/>
</svg>
<svg class="a" style="left:505.70px;top:553.00px" width="31" height="31" viewBox="505.70 553.00 31 31" fill="none" stroke="#777" stroke-width="1.4" stroke-linejoin="round"><path d="M518.76 559.76 L519.00 556.21 L523.60 556.21 L523.84 559.76 L525.76 560.55 L528.44 558.22 L531.68 561.46 L529.35 564.14 L530.14 566.06 L533.69 566.30 L533.69 570.90 L530.14 571.14 L529.35 573.06 L531.68 575.74 L528.44 578.98 L525.76 576.65 L523.84 577.44 L523.60 580.99 L519.00 580.99 L518.76 577.44 L516.84 576.65 L514.16 578.98 L510.92 575.74 L513.25 573.06 L512.46 571.14 L508.91 570.90 L508.91 566.30 L512.46 566.06 L513.25 564.14 L510.92 561.46 L514.16 558.22 L516.84 560.55 Z"/><circle cx="521.30" cy="568.60" r="4.00"/></svg>
<svg class="a" style="left:676px;top:520px" width="930" height="386" viewBox="676 520 930 386">
<path d="M679 534.7 H1600 M679 626 H1600 M679 717.3 H1600 M679 808.6 H1600" stroke="#e2e2e2" stroke-width="1.5"/>
<path d="M685 524 V900" stroke="#cfcfcf" stroke-width="1"/>
<rect x="721.6" y="893.0" width="1.6" height="6.0" fill="#5ab0e0"/><rect x="724.2" y="894.0" width="1.6" height="5.0" fill="#2ec4e6"/><rect x="726.2" y="894.7" width="1.6" height="4.3" fill="#f78a2d"/><rect x="729.2" y="896.0" width="1.6" height="3.0" fill="#88d62a"/><rect x="730.7" y="888.0" width="1.6" height="11.0" fill="#8fa0e0"/><rect x="734.2" y="892.0" width="1.6" height="7.0" fill="#ecdcb0"/><rect x="736.2" y="896.0" width="1.6" height="3.0" fill="#3aa0e0"/><rect x="738.7" y="857.0" width="1.6" height="42.0" fill="#8b2a3a"/><rect x="740.7" y="892.0" width="1.6" height="7.0" fill="#334a8a"/><rect x="743.7" y="542.0" width="1.6" height="357.0" fill="#7fd6cc"/><rect x="748.2" y="855.0" width="1.6" height="44.0" fill="#cccc80"/><rect x="751.2" y="870.0" width="1.6" height="29.0" fill="#6a5a3a"/><rect x="755.7" y="890.0" width="1.6" height="9.0" fill="#8a8a9a"/><rect x="759.7" y="894.0" width="1.6" height="5.0" fill="#f7a05a"/><rect x="761.2" y="887.0" width="1.6" height="12.0" fill="#fbc840"/><rect x="763.7" y="886.0" width="1.6" height="13.0" fill="#10b8e8"/><rect x="793.2" y="895.0" width="1.6" height="4.0" fill="#5ab0e0"/><rect x="795.2" y="897.0" width="1.6" height="2.0" fill="#8b2a3a"/><rect x="800.7" y="882.0" width="1.6" height="17.0" fill="#7fd6cc"/><rect x="805.2" y="891.0" width="1.6" height="8.0" fill="#cccc80"/><rect x="812.7" y="898.0" width="1.6" height="1.0" fill="#333"/><rect x="818.2" y="891.0" width="1.6" height="8.0" fill="#fbbd25"/><rect x="837.0" y="893.7" width="1.6" height="5.3" fill="#2ec4e6"/><rect x="839.7" y="898.0" width="1.6" height="1.0" fill="#f7c080"/><rect x="852.2" y="895.0" width="1.6" height="4.0" fill="#8b4a5a"/><rect x="857.6" y="869.0" width="1.6" height="30.0" fill="#6ab8e8"/><rect x="865.2" y="897.0" width="1.6" height="2.0" fill="#8a7a6a"/><rect x="867.2" y="898.0" width="1.6" height="1.0" fill="#2ec4e6"/><rect x="893.8" y="897.0" width="1.6" height="2.0" fill="#2ec4e6"/><rect x="909.2" y="898.0" width="1.6" height="1.0" fill="#f7c080"/><rect x="914.2" y="879.0" width="1.6" height="20.0" fill="#6ab8e8"/><rect x="921.2" y="898.0" width="1.6" height="1.0" fill="#aaa"/><rect x="950.7" y="893.0" width="1.6" height="6.0" fill="#2ec4e6"/><rect x="971.2" y="889.7" width="1.6" height="9.3" fill="#7fd6cc"/><rect x="1022.2" y="896.0" width="1.6" height="3.0" fill="#8b4a5a"/><rect x="1028.0" y="879.0" width="1.6" height="20.0" fill="#7fd6cc"/><rect x="1034.2" y="897.0" width="1.6" height="2.0" fill="#cccc80"/><rect x="1047.7" y="897.0" width="1.6" height="2.0" fill="#2ec4e6"/><rect x="1079.2" y="898.0" width="1.6" height="1.0" fill="#8b4a5a"/><rect x="1084.7" y="862.0" width="1.6" height="37.0" fill="#8fd0ec"/><rect x="1101.2" y="895.0" width="1.6" height="4.0" fill="#f7a05a"/><rect x="1136.7" y="897.0" width="1.6" height="2.0" fill="#8b4a5a"/><rect x="1141.9" y="877.7" width="1.6" height="21.3" fill="#7fd6cc"/><rect x="1146.2" y="897.0" width="1.6" height="2.0" fill="#cccc80"/><rect x="1193.2" y="897.0" width="1.6" height="2.0" fill="#8b4a5a"/><rect x="1198.8" y="875.4" width="1.6" height="23.6" fill="#7fd6cc"/><rect x="1203.2" y="885.0" width="1.6" height="14.0" fill="#cccc80"/><rect x="1206.2" y="891.0" width="1.6" height="8.0" fill="#8a7a5a"/><rect x="1234.2" y="896.0" width="1.6" height="3.0" fill="#3aa0e0"/><rect x="1250.7" y="890.5" width="1.6" height="8.5" fill="#8a6a9a"/><rect x="1252.7" y="889.0" width="1.6" height="10.0" fill="#334a8a"/><rect x="1255.7" y="861.7" width="1.6" height="37.3" fill="#4ab8e0"/><rect x="1262.9" y="894.0" width="1.6" height="5.0" fill="#8a7a5a"/><rect x="1273.2" y="888.0" width="1.6" height="11.0" fill="#fbc840"/><rect x="1292.2" y="895.0" width="1.6" height="4.0" fill="#2ec4e6"/><rect x="1303.8" y="896.0" width="1.6" height="3.0" fill="#2ec4e6"/><rect x="1307.2" y="894.0" width="1.6" height="5.0" fill="#a87a3d"/><rect x="1312.5" y="872.0" width="1.6" height="27.0" fill="#4ab8e0"/><rect x="1327.7" y="898.0" width="1.6" height="1.0" fill="#ccc"/><rect x="1334.2" y="898.0" width="1.6" height="1.0" fill="#5b6ed0"/><rect x="1365.2" y="898.0" width="1.6" height="1.0" fill="#f0b0b0"/><rect x="1369.2" y="890.0" width="1.6" height="9.0" fill="#7fd6cc"/><rect x="1382.2" y="898.0" width="1.6" height="1.0" fill="#3aa0e0"/><rect x="1420.2" y="895.0" width="1.6" height="4.0" fill="#8b4a5a"/><rect x="1426.2" y="877.5" width="1.6" height="21.5" fill="#7fd6cc"/><rect x="1462.2" y="894.0" width="1.6" height="5.0" fill="#2ec4e6"/><rect x="1468.2" y="897.0" width="1.6" height="2.0" fill="#2ec4e6"/><rect x="1483.2" y="874.8" width="1.6" height="24.2" fill="#8fd0ec"/><rect x="1497.7" y="898.0" width="1.6" height="1.0" fill="#f0b0b0"/><rect x="1519.6" y="898.0" width="1.6" height="1.0" fill="#8fd0ec"/><rect x="1525.2" y="893.0" width="1.6" height="6.0" fill="#88d62a"/><rect x="1528.2" y="896.0" width="1.6" height="3.0" fill="#cccc80"/><rect x="1531.2" y="897.0" width="1.6" height="2.0" fill="#2ec4e6"/><rect x="1534.2" y="894.0" width="1.6" height="5.0" fill="#8b4a5a"/><rect x="1540.2" y="849.0" width="1.6" height="50.0" fill="#7fd6cc"/><rect x="1545.2" y="897.0" width="1.6" height="2.0" fill="#cccc80"/><rect x="1548.2" y="898.0" width="1.6" height="1.0" fill="#6a5a3a"/>
<path d="M678 900 H1600" stroke="#c8c8c8" stroke-width="2.5"/>
</svg>
<div class="a ylab" style="left:552px;top:523px;line-height:24px" id="y4">$400,000</div>
<div class="a ylab" style="left:552px;top:614px;line-height:24px" id="y3">$300,000</div>
<div class="a ylab" style="left:552px;top:705px;line-height:24px" id="y2">$200,000</div>
<div class="a ylab" style="left:552px;top:797px;line-height:24px" id="y1">$100,000</div>
<div class="a ylab" style="left:552px;top:888px;line-height:24px" id="y0">$0</div>
<div class="a" style="left:546.5px;top:761px;font-size:19px;letter-spacing:0.5px;line-height:24px;color:#111;white-space:nowrap;transform-origin:0 0;transform:rotate(-90deg)" id="ytitle">Total Sales</div>
<div class="a xl" style="left:752.4px;top:907px">Unknown</div><div class="a xl" style="left:808.6px;top:907px">Brazil</div><div class="a xl" style="left:866.3px;top:907px">Canada</div><div class="a xl" style="left:922.5px;top:907px">China</div><div class="a xl" style="left:978.2px;top:907px">Denmark</div><div class="a xl" style="left:1036.4px;top:907px">India</div><div class="a xl" style="left:1092.5px;top:907px">Japan</div><div class="a xl" style="left:1149.0px;top:907px">Mexico</div><div class="a xl" style="left:1207.0px;top:907px">Norway</div><div class="a xl" style="left:1263.7px;top:907px">Russia</div><div class="a xl" style="left:1320.0px;top:907px">South Africa</div><div class="a xl" style="left:1378.0px;top:907px">Switzerland</div><div class="a xl" style="left:1435.7px;top:907px">Turkey</div><div class="a xl" style="left:1490.6px;top:907px">Uganda</div><div class="a xl" style="left:1547.5px;top:907px">United States</div>
<div class="a" style="left:1106px;top:1012px;font-size:19.5px;letter-spacing:0.6px;line-height:24px;color:#111" id="xtitle">Country</div>
<div class="a" style="left:1623px;top:518px;font-size:19.5px;letter-spacing:0.5px;line-height:24px;color:#777" id="lgtitle">Product</div>
<div class="a lg" style="top:556px"><div class="sw" style="background:#777777"></div><div class="lt">Unknown</div></div><div class="a lg" style="top:590px"><div class="sw" style="background:#2d88e0"></div><div class="lt">Air Purifiers</div></div><div class="a lg" style="top:624px"><div class="sw" style="background:#10c9b0"></div><div class="lt">Art Supplies</div></div><div class="a lg" style="top:658px"><div class="sw" style="background:#e84b6e"></div><div class="lt">Baby Food</div></div><div class="a lg" style="top:692px"><div class="sw" style="background:#f78a2d"></div><div class="lt">Beverages</div></div><div class="a lg" style="top:726px"><div class="sw" style="background:#fbbd25"></div><div class="lt">Binder Clips</div></div><div class="a lg" style="top:760px"><div class="sw" style="background:#9171d0"></div><div class="lt">Binding Machines</div></div><div class="a lg" style="top:794px"><div class="sw" style="background:#03c1e0"></div><div class="lt">Binding Supplies</div></div><div class="a lg" style="top:828px"><div class="sw" style="background:#88d62a"></div><div class="lt">Biscuits</div></div><div class="a lg" style="top:862px"><div class="sw" style="background:#5b6ed0"></div><div class="lt">Bread</div></div><div class="a lg" style="top:896px"><div class="sw" style="background:#a87a3d"></div><div class="lt">Business Envelopes</div></div>
<div class="a" style="left:1623px;top:935px;font-size:18.5px;line-height:24px;color:#111;white-space:nowrap" id="more">+ 31 more...</div>
<svg class="a" style="left:1774px;top:1033px" width="32" height="28" viewBox="0 0 32 28" fill="none" stroke="#666" stroke-width="1.6">
<path d="M2 10 L5.5 1.5 L9 10 M3.2 7 H7.8" stroke-width="1.3"/><path d="M2 17.5 H9 L2 26 H9" stroke-width="1.3"/>
<path d="M15 2 V26 M11.5 22 L15 26 L18.5 22 M25 26 V2 M21.5 6 L25 2 L28.5 6"/>
</svg>
<svg class="a" style="left:1815px;top:1034px" width="34" height="28" viewBox="0 0 34 28" fill="none" stroke="#666" stroke-width="1.5">
<path d="M1.5 1.5 H25 L16 12 V21 L11 25.5 V12 Z" stroke-linejoin="round"/><path d="M26 14 V25 M20.5 19.5 H31.5"/>
</svg>
<svg class="a" style="left:1858.80px;top:1032.80px" width="30" height="30" viewBox="1858.80 1032.80 30 30" fill="none" stroke="#777" stroke-width="1.4" stroke-linejoin="round"><path d="M1871.55 1039.44 L1871.78 1036.00 L1876.22 1036.00 L1876.45 1039.44 L1878.31 1040.22 L1880.91 1037.95 L1884.05 1041.09 L1881.78 1043.69 L1882.56 1045.55 L1886.00 1045.78 L1886.00 1050.22 L1882.56 1050.45 L1881.78 1052.31 L1884.05 1054.91 L1880.91 1058.05 L1878.31 1055.78 L1876.45 1056.56 L1876.22 1060.00 L1871.78 1060.00 L1871.55 1056.56 L1869.69 1055.78 L1867.09 1058.05 L1863.95 1054.91 L1866.22 1052.31 L1865.44 1050.45 L1862.00 1050.22 L1862.00 1045.78 L1865.44 1045.55 L1866.22 1043.69 L1863.95 1041.09 L1867.09 1037.95 L1869.69 1040.22 Z"/><circle cx="1874.00" cy="1048.00" r="3.90"/></svg>
<div class="a" style="left:488px;top:1074px;width:1432px;height:2px;background:#e2e2e2"></div>
<div class="a" style="left:0;top:1079px;width:1920px;height:1px;background:#1b1f26"></div>
</body></html>
